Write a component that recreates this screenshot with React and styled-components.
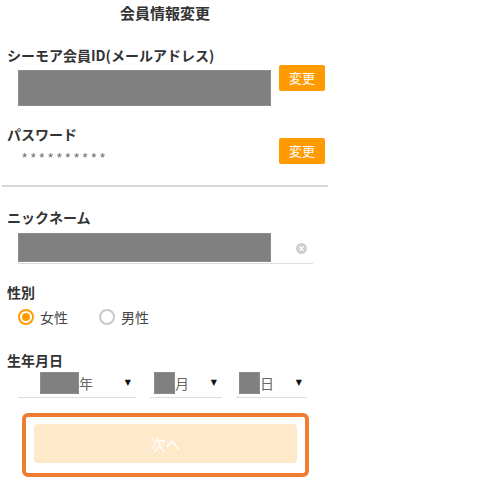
import React from 'react';
import styled, { createGlobalStyle } from 'styled-components';

const GlobalStyle = createGlobalStyle`
  html, body {
    margin: 0;
    padding: 0;
    background: #fff;
  }
  body {
    font-family: "Noto Sans CJK JP", "Noto Sans", sans-serif;
    color: #333;
  }
`;

const Page = styled.div`
  width: 330px;
`;

const Title = styled.h1`
  margin: 0;
  height: 26px;
  line-height: 26px;
  font-size: 15px;
  font-weight: bold;
  text-align: center;
  color: #333;
`;

const Label = styled.div`
  margin-top: ${p => p.$top}px;
  padding-left: 7px;
  height: 20px;
  line-height: 20px;
  font-size: 14px;
  font-weight: bold;
  color: #333;
  white-space: nowrap;
`;

const Masked = styled.div`
  width: ${p => p.$w}px;
  height: ${p => p.$h}px;
  background: #808080;
  box-shadow: inset 0 0 0 1px #8c8c8c;
  flex-shrink: 0;
`;

const IdRow = styled.div`
  display: flex;
  align-items: flex-start;
  padding-left: 18px;
  height: 41px;
`;

const IdBox = styled(Masked)`
  margin-top: 5px;
`;

const ChangeButton = styled.button`
  width: 46px;
  height: 26px;
  margin-left: 8px;
  margin-top: ${p => p.$top || 0}px;
  padding: 0;
  border: none;
  border-radius: 2px;
  background: #ff9a00;
  color: #fff;
  font-family: "Noto Sans CJK JP", sans-serif;
  font-size: 13px;
  line-height: 26px;
  cursor: pointer;
`;

const PasswordRow = styled.div`
  display: grid;
  grid-template-columns: 271px 54px;
  margin-top: 18px;
`;

const PasswordInfo = styled.div`
  display: flex;
  flex-direction: column;
`;

const Stars = styled.div`
  margin-top: 4px;
  padding-left: 22px;
  height: 20px;
  line-height: 20px;
  font-family: "Liberation Sans", sans-serif;
  font-size: 13px;
  letter-spacing: 3.6px;
  color: #666;
`;

const Divider = styled.hr`
  margin: 17px 2px 0;
  border: none;
  height: 2px;
  background: #d6d6d6;
`;

const TextField = styled.div`
  display: flex;
  align-items: center;
  margin: 6px 0 0 18px;
  width: 295px;
  height: 30px;
  border-bottom: 1px solid #ddd;
`;

const NameBox = styled(Masked)`
  align-self: flex-start;
`;

const ClearIcon = styled.svg`
  margin-left: auto;
  margin-right: 6px;
  width: 11px;
  height: 11px;
`;

const RadioGroup = styled.div`
  display: flex;
  align-items: center;
  margin-top: 5px;
  padding-left: 18px;
  height: 20px;
`;

const RadioOption = styled.label`
  display: flex;
  align-items: center;
  gap: 6px;
  margin-right: ${p => p.$gap || 0}px;
  font-size: 14px;
  color: #444;
`;

const RadioCircle = styled.span`
  box-sizing: border-box;
  width: 16px;
  height: 16px;
  border-radius: 50%;
  border: 2px solid ${p => (p.$on ? '#ff9a00' : '#c8c8c8')};
  display: flex;
  align-items: center;
  justify-content: center;
  &::after {
    content: '';
    width: 8px;
    height: 8px;
    border-radius: 50%;
    background: ${p => (p.$on ? '#ff9a00' : 'transparent')};
  }
`;

const DateRow = styled.div`
  display: flex;
  gap: 14px;
  margin-top: 2px;
  padding-left: 18px;
`;

const Select = styled.div`
  display: flex;
  align-items: flex-start;
  box-sizing: border-box;
  width: ${p => p.$w}px;
  height: 26px;
  padding-left: ${p => p.$pad}px;
  padding-right: ${p => p.$right}px;
  border-bottom: 1px solid #ddd;
`;

const Unit = styled.span`
  height: 22px;
  line-height: 22px;
  font-size: 14px;
  color: #666;
`;

const Arrow = styled.span`
  margin-left: auto;
  height: 22px;
  line-height: 22px;
  font-family: "DejaVu Sans", sans-serif;
  font-size: 8px;
  color: #111;
`;

const Highlight = styled.div`
  margin: 15px 0 0 22px;
  width: 287px;
  box-sizing: border-box;
  padding: 7px 8px 10px;
  border: 4px solid #ef7d31;
  border-radius: 6px;
`;

const NextButton = styled.button`
  display: block;
  width: 100%;
  height: 39px;
  border: none;
  border-radius: 4px;
  background: #ffe9cb;
  color: #fff;
  font-family: "Noto Sans CJK JP", sans-serif;
  font-size: 15px;
`;

const dateFields = [
  { unit: '年', w: 118, pad: 22, right: 5, box: 39 },
  { unit: '月', w: 72, pad: 4, right: 5, box: 21 },
  { unit: '日', w: 71, pad: 3, right: 5, box: 21 },
];

const App = () => (
  <>
    <GlobalStyle />
    <Page>
      <Title>会員情報変更</Title>

      <Label $top={19}>シーモア会員ID(メールアドレス)</Label>
      <IdRow>
        <IdBox $w={253} $h={36} />
        <ChangeButton>変更</ChangeButton>
      </IdRow>

      <PasswordRow>
        <PasswordInfo>
          <Label $top={0}>パスワード</Label>
          <Stars>**********</Stars>
        </PasswordInfo>
        <ChangeButton $top={14}>変更</ChangeButton>
      </PasswordRow>

      <Divider />

      <Label $top={20}>ニックネーム</Label>
      <TextField>
        <NameBox $w={253} $h={29} />
        <ClearIcon viewBox="0 0 12 12">
          <circle cx="6" cy="6" r="6" fill="#cfcfcf" />
          <path d="M4 4 L8 8 M8 4 L4 8" stroke="#fff" strokeWidth="1.4" strokeLinecap="round" />
        </ClearIcon>
      </TextField>

      <Label $top={18}>性別</Label>
      <RadioGroup>
        <RadioOption $gap={31}>
          <RadioCircle $on />
          女性
        </RadioOption>
        <RadioOption>
          <RadioCircle />
          男性
        </RadioOption>
      </RadioGroup>

      <Label $top={23}>生年月日</Label>
      <DateRow>
        {dateFields.map(f => (
          <Select key={f.unit} $w={f.w} $pad={f.pad} $right={f.right}>
            <Masked $w={f.box} $h={22} />
            <Unit>{f.unit}</Unit>
            <Arrow>▼</Arrow>
          </Select>
        ))}
      </DateRow>

      <Highlight>
        <NextButton>次へ</NextButton>
      </Highlight>
    </Page>
  </>
);

export default App;
